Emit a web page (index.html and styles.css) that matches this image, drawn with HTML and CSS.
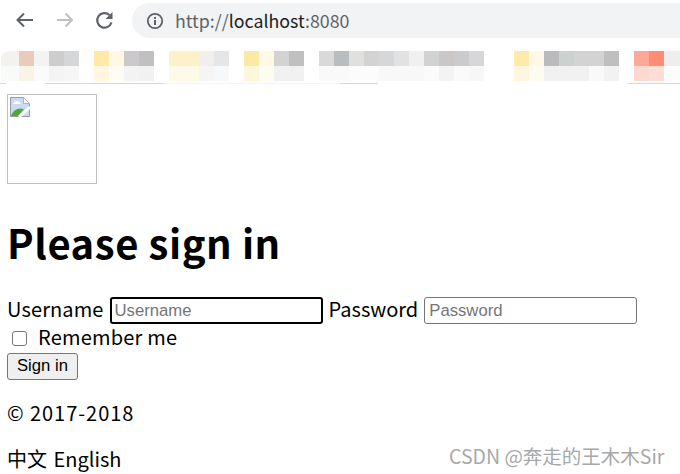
FILE: index.html
```html
<!DOCTYPE html>
<html lang="en">

<head>
    <meta charset="utf-8">
    <title>Please sign in</title>
    <link rel="stylesheet" href="styles.css">
</head>

<body>
    <header class="browser-bar">
        <svg class="nav-icon" viewBox="0 0 20 20"><path d="M19 10H4M10 3.500 3.500 10l6.500 6.500" fill="none" stroke="#5f6368" stroke-width="2"/></svg>
        <svg class="nav-icon" viewBox="0 0 20 20"><path d="M3 10H18M11.500 3.500 18 10l-6.500 6.500" fill="none" stroke="#bdc1c6" stroke-width="2"/></svg>
        <svg class="nav-icon" viewBox="0 0 20 20"><path d="M17.500 12.500A7.300 7.300 0 1 1 15.500 5" fill="none" stroke="#5f6368" stroke-width="2.200"/><path d="M18.500 2v7H11.500z" fill="#5f6368"/></svg>
        <div class="address">
            <svg class="info-icon" viewBox="0 0 18 18"><circle cx="9" cy="9" r="7.200" fill="none" stroke="#5f6368" stroke-width="1.800"/><path d="M8 8h2v5H8zM8 5h2v2H8z" fill="#5f6368"/></svg>
            <span class="url">http://<b>localhost</b>:8080</span>
        </div>
    </header>

    <div class="bookmarks">
        <div class="blur-row top"></div>
        <div class="blur-row bottom"></div>
    </div>

    <main>
        <div class="logo">
            <svg class="broken" viewBox="0 0 20 20">
                <path d="M.5.500h13l6 6v13H.5z" fill="#c9dcf5" stroke="#9a9a9a"/>
                <path d="M13.500.500v6h6z" fill="#fff" stroke="#b5b5b5"/>
                <path d="M3 7c2-4 6-4 8 0z" fill="#fff"/>
                <path d="M1 19c2-6 7-9 13-7l-6 7z" fill="#4fa63a"/>
                <path d="M9 20 20 10" stroke="#fff" stroke-width="3"/>
            </svg>
        </div>
        <h1>Please sign in</h1>
        <form>
            <div class="fields">
                <label>Username</label>
                <input class="focused" type="text" placeholder="Username">
                <label class="pass-label">Password</label>
                <input type="password" placeholder="Password">
            </div>
            <div class="remember">
                <span class="check"></span>
                <label>Remember me</label>
            </div>
            <button type="button">Sign in</button>
        </form>
        <p class="copy">© 2017-2018</p>
        <p class="langs">中文 English</p>
    </main>

    <div class="watermark">CSDN @奔走的王木木Sir</div>
</body>

</html>
```

FILE: styles.css
```css
html, body {
    margin: 0;
    height: 474px;
    overflow: hidden;
    background: #fff;
}

body {
    position: relative;
    color: #000;
    font-family: "Noto Sans CJK SC", "Noto Sans", sans-serif;
    font-size: 20px;
}

.browser-bar {
    display: flex;
    align-items: center;
    height: 35px;
    padding: 3px 0 0 14px;
}

.nav-icon {
    width: 20px;
    height: 20px;
    margin: 0 20px 1px 0;
}

.address {
    display: flex;
    align-items: center;
    flex: 1;
    height: 35px;
    margin-left: -2px;
    padding-left: 14px;
    background-color: #f1f3f4;
    border-radius: 18px 0 0 18px;
}

.info-icon {
    width: 18px;
    height: 18px;
    margin-right: 11px;
}

.url {
    font-size: 17.800px;
    line-height: 32px;
    margin-bottom: 2px;
    color: #5f6368;
}

.url b {
    font-weight: normal;
    color: #202124;
}

/* the divider is smeared away in places by the blur */
.bookmarks {
    margin-top: 13px;
    height: 33px;
    background: linear-gradient(90deg,
        #d9d9d9 0 6px, #fff 6px 45px, #d9d9d9 45px 165px, #f4f4f4 165px 340px,
        #d9d9d9 340px 378px, #fff 378px 627px, #d9d9d9 627px) bottom / 100% 1px no-repeat;
}

.blur-row {
    height: 15px;
    margin-left: 4px;
}

.blur-row.top {
    border-top-left-radius: 8px;
    box-shadow: -3px 0 0 #f3f2ef;
    background: linear-gradient(90deg,
        #f3f2ef 0 15px, #e8cbbb 15px 30px, #f3f3f1 30px 45px, #cdcdcd 45px 60px, #d5d6d8 60px 75px, #fff 75px 90px,
        #fee9a8 90px 105px, #fff8e4 105px 120px, #cbc9cc 120px 135px, #c0c0c0 135px 150px, #fff 150px 165px,
        #fdf1c9 165px 195px, #f0efed 195px 210px, #e5e6e8 210px 225px, #fff 225px 240px,
        #fde8a5 240px 255px, #fff8e4 255px 270px, #d3d3d3 270px 285px, #c0c0c0 285px 300px, #fff 300px 315px,
        #d9d9d9 315px 330px, #babdc0 330px 345px, #e0e0de 345px 360px, #d3d3d3 360px 375px, #d6d7d9 375px 390px,
        #e2e2e2 390px 405px, #f0f0f0 405px 420px, #d1d3d3 420px 435px, #cbc7c7 435px 450px, #cbcbcd 450px 465px,
        #d7d7d9 465px 480px, #fff 480px 510px,
        #feeaa9 510px 525px, #fff8e6 525px 540px, #bababd 540px 555px, #ccd0cf 555px 570px, #d3d3d3 570px 600px,
        #bfbfbf 600px 615px, #fff 615px 630px,
        #ffa898 630px 645px, #ff8c75 645px 660px, #eee 660px 675px);
}

.blur-row.bottom {
    box-shadow: -3px 0 0 #f9fbf8;
    background: linear-gradient(90deg,
        #f9fbf8 0 15px, #f8f5e6 15px 30px, #fbfbfb 30px 45px, #f4f4f4 45px 60px, #f6f6f6 60px 75px, #fff 75px 90px,
        #fff7df 90px 105px, #fffcf3 105px 120px, #f3f3f3 120px 135px, #f1f1f1 135px 150px, #fff 150px 165px,
        #fff9e8 165px 195px, #f5f5f5 195px 210px, #f6f8f9 210px 225px, #fff 225px 240px,
        #fff6dc 240px 255px, #fffcf2 255px 270px, #f1f1f1 270px 300px, #fff 300px 315px,
        #f9f9f9 315px 345px, #fcfcfc 345px 375px, #f8f8f8 375px 420px, #fbfbfb 420px 435px, #f3f3f3 435px 450px,
        #fafafa 450px 465px, #f7f7f7 465px 480px, #fff 480px 510px,
        #fff6df 510px 525px, #fffbf0 525px 540px, #f1f1f1 540px 585px, #f9f9f9 585px 600px,
        #f2f2f2 600px 615px, #fff 615px 630px,
        #ffd8d0 630px 645px, #ffdcd5 645px 660px, #fcfcfc 660px 675px);
}

main {
    padding: 10px 0 0 7px;
}

.logo {
    box-sizing: border-box;
    width: 90px;
    height: 90px;
    padding: 2px;
    border: 1px solid #c0c0c0;
}

.broken {
    display: block;
    width: 20px;
    height: 20px;
}

h1 {
    margin: 26px 0 23px;
    font-size: 40px;
    line-height: 64px;
    font-weight: bold;
    letter-spacing: 0.550px;
}

.fields {
    display: flex;
    align-items: center;
    height: 27px;
}

.fields label {
    letter-spacing: 0.120px;
    margin-bottom: 4px;
}

.fields .pass-label {
    letter-spacing: 0;
}

input {
    box-sizing: border-box;
    width: 213px;
    height: 27px;
    margin: 0 6px;
    padding: 0 4px;
    font-family: "Liberation Sans", sans-serif;
    font-size: 16.700px;
    border: 1px solid #767676;
    border-radius: 3px;
}

input.focused {
    border: 2px solid #000;
    padding: 0 3px;
}

.remember {
    display: flex;
    align-items: center;
    height: 28px;
}

.remember label {
    letter-spacing: 0.200px;
    margin-bottom: 4px;
}

.check {
    box-sizing: border-box;
    width: 15px;
    height: 15px;
    margin: 0 11px 0 5px;
    border: 1px solid #767676;
    border-radius: 3px;
}

button {
    display: block;
    box-sizing: border-box;
    width: 71px;
    height: 27px;
    margin-top: 1px;
    padding: 0 0 2px;
    font-family: "Liberation Sans", sans-serif;
    font-size: 16.700px;
    color: #000;
    background-color: #efefef;
    border: 1px solid #767676;
    border-radius: 3px;
}

p {
    margin: 0;
    line-height: 28px;
}

.copy {
    margin-top: 19px;
    letter-spacing: 0.950px;
}

.langs {
    margin-top: 18px;
    word-spacing: 2px;
}

.watermark {
    position: absolute;
    left: 449px;
    top: 441px;
    font-size: 19.500px;
    color: #a8a8a8;
    white-space: nowrap;
}
```
